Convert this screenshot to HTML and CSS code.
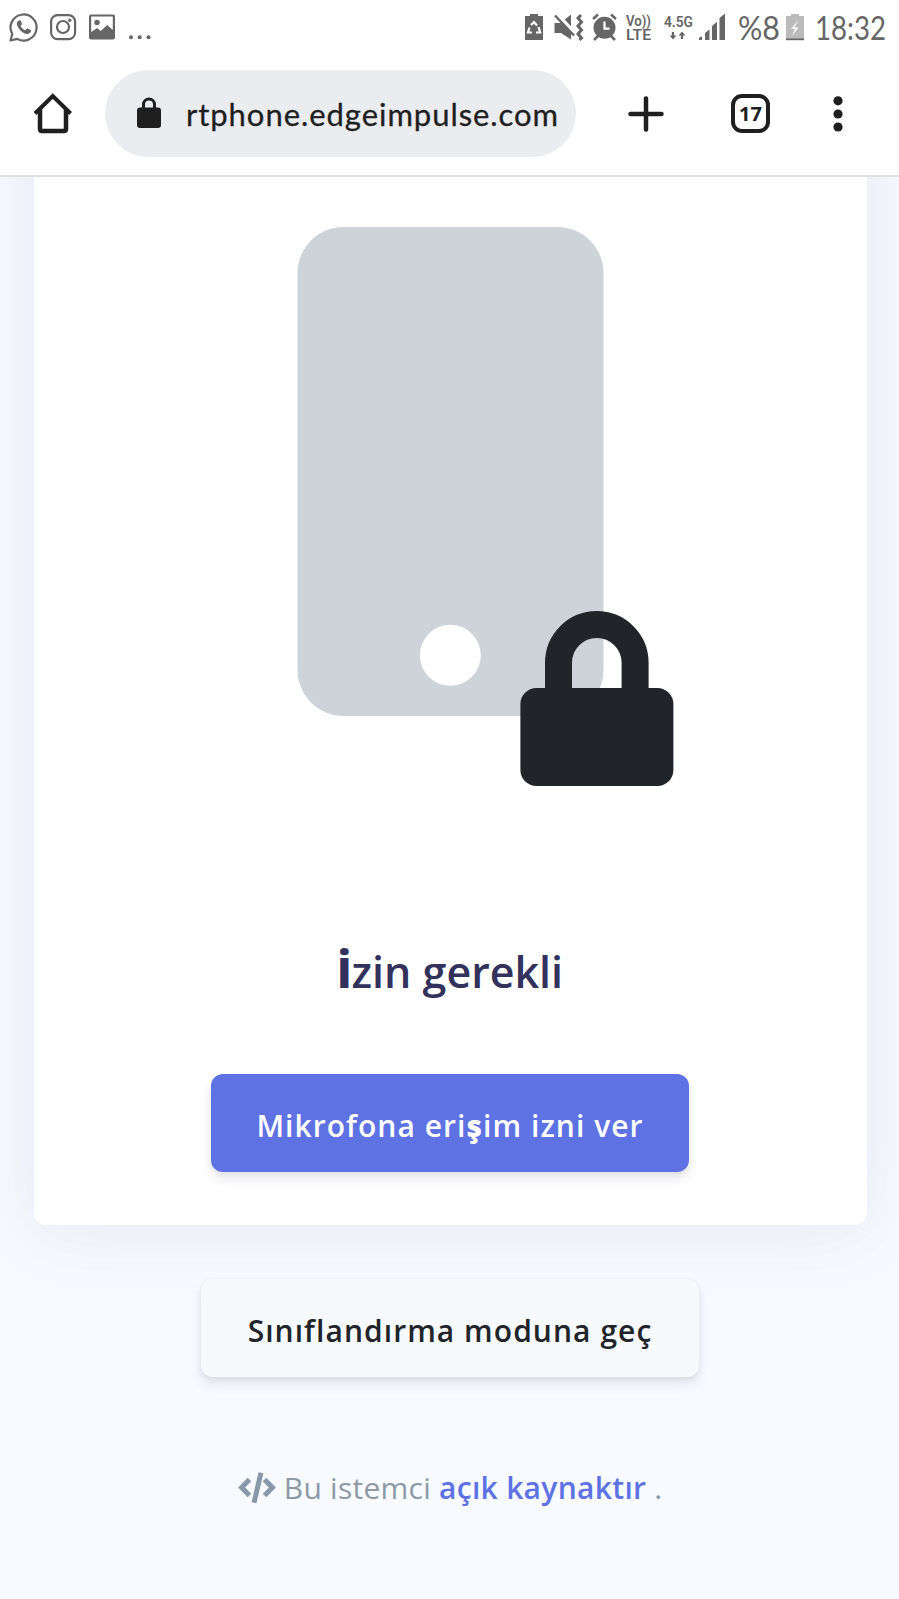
FILE: index.html
```
<!DOCTYPE html>
<html lang="tr">
<head>
<meta charset="utf-8">
<title>İzin gerekli</title>
<link rel="stylesheet" href="styles.css">
</head>
<body>
<header class="browser">
  <div class="status">
    <svg class="ic" width="30" height="55" viewBox="9 0 30 55"><path d="M10.5 40.5 12.3 34A13 13 0 1 1 17.3 38.9Z" fill="none" stroke="#666" stroke-width="2.2" stroke-linejoin="round"/><path d="M19 20.5c-3 1.3-2.5 4.500-.5 7.500 2.700 4 6.500 6.700 10 5.800 2-.6 2.900-2.400 2.500-3.500l-3.800-2-2 2c-2-.7-3.900-2.600-4.600-4.500l1.500-1.800-1.600-3.700z" fill="#666"/></svg>
    <svg class="ic insta" width="28" height="55" viewBox="49 0 28 55"><g fill="none" stroke="#666" stroke-width="2.200"><rect x="51.100" y="15.100" width="24" height="24" rx="6.500"/><circle cx="63" cy="27" r="6"/></g><circle cx="69.800" cy="20.300" r="1.700" fill="#666"/></svg>
    <svg class="ic photo" width="28" height="55" viewBox="88 0 28 55"><path fill="#666" fill-rule="evenodd" d="M91 14.500h22a2 2 0 0 1 2 2v21a2 2 0 0 1-2 2H91a2 2 0 0 1-2-2v-21a2 2 0 0 1 2-2zM91.200 16.600v15.400l6-4 3.500 3 6.500-6 5.600 5V16.600z"/><circle cx="97" cy="22.500" r="2.700" fill="#666"/></svg>
    <svg class="ic dots" width="24" height="55" viewBox="128 0 24 55" fill="#666"><circle cx="131" cy="37.300" r="2"/><circle cx="139.700" cy="37.300" r="2"/><circle cx="148.500" cy="37.300" r="2"/></svg>
    <svg class="ic right" width="380" height="55" viewBox="519 0 380 55">
      <path d="M530 14h8v2h5v24h-18V16h5z" fill="#666"/>
      <g fill="none" stroke="#fff" stroke-width="2.200"><path d="m531 25 3-3 3 3.500M529.500 27.500l-1.500 5h4M538.500 27l1.700 5.500H536"/></g>
      <path d="M554.500 23h6L571 14.500v25L561 33h-6.500z" fill="#666"/><path d="m556 13.500 20 21" stroke="#fff" stroke-width="4"/><path d="m555 15.500 19 20" stroke="#666" stroke-width="2.500"/>
      <path d="m581 15-3 3 3.500 4-3.500 4 3.500 4-3.500 4 3.500 4-2 2" fill="none" stroke="#666" stroke-width="3"/>
      <circle cx="604.500" cy="27.800" r="11" fill="#666"/><path d="m593 19 5-4.500M611 14.500l5 4.500M598 36l-4 4M611 36l4 4" stroke="#666" stroke-width="2.500"/><path d="M604.500 21.500v7.200h5" fill="none" stroke="#fff" stroke-width="2.200"/>
      <g class="tiny"><text x="626" y="25.500" textLength="25" lengthAdjust="spacingAndGlyphs">Vo))</text><text x="626" y="40" textLength="25" lengthAdjust="spacingAndGlyphs">LTE</text><text x="664" y="26.500" textLength="29" lengthAdjust="spacingAndGlyphs">4.5G</text></g>
      <path d="M673 32v5M682 39v-5" stroke="#666" stroke-width="2.300"/><path d="M669.500 35.500h7l-3.500 4zM678.500 35.500h7l-3.500-4z" fill="#666"/>
      <path d="M699 40v-2.200l3-1.500V40zM705 40v-7l4.500-3.800V40zM712 40V26l5-4.200V40zM719.500 40V18l5.500-4.500V40z" fill="#666"/>
      <text class="clock" x="738" y="40" textLength="42" lengthAdjust="spacingAndGlyphs">%8</text>
      <path d="M791 14h8v2h5v24h-18V16h5z" fill="#bbb"/><path d="M786 38.500h18v1.700h-18z" fill="#666"/><path d="m798.500 20-7.500 9h4l-3 7 6.500-8.500h-4z" fill="#fff"/>
      <text class="clock" x="815" y="40" textLength="71" lengthAdjust="spacingAndGlyphs">18:32</text>
    </svg>
  </div>
  <div class="toolbar">
    <svg class="ic home" width="42" height="42" viewBox="32 92 42 42"><path d="M40 109v20q0 2 2 2h22q2 0 2-2V109" fill="none" stroke="#1f1f1f" stroke-width="4.500" stroke-linejoin="round"/><path d="m35 113.500 17.800-17.500L70.600 113.500" fill="none" stroke="#1f1f1f" stroke-width="4"/></svg>
    <div class="address">
      <svg class="ic lock" width="24" height="32" viewBox="0 0 24 32"><path d="M6.500 13V7.500a5.500 5.500 0 0 1 11 0v5.500" fill="none" stroke="#1f1f1f" stroke-width="3"/><rect y="10.500" width="24" height="20.500" rx="3" fill="#1f1f1f"/></svg>
      <span class="url">rtphone.edgeimpulse.com</span>
    </div>
    <svg class="ic plus" width="36" height="36" viewBox="0 0 36 36"><path d="M18 2.500v31M2.500 18h31" stroke="#1f1f1f" stroke-width="4.500" stroke-linecap="round"/></svg>
    <div class="tabs">17</div>
    <svg class="ic menu" width="10" height="36" viewBox="0 0 10 36" fill="#1f1f1f"><circle cx="5" cy="4.800" r="4.600"/><circle cx="5" cy="18" r="4.600"/><circle cx="5" cy="31" r="4.600"/></svg>
  </div>
</header>
<main class="page">
  <section class="card">
    <svg class="ic phone" width="378" height="562" viewBox="297 226 378 562">
      <rect x="297.500" y="227" width="306" height="489" rx="46" fill="#ced3da"/><circle cx="450.300" cy="655.300" r="30.500" fill="#fff"/>
      <path d="M558.500 700v-37.200a38.300 38.300 0 0 1 76.600 0V700" fill="none" stroke="#212429" stroke-width="27"/>
      <rect x="520.400" y="688" width="153" height="98" rx="16" fill="#212429"/>
    </svg>
    <h1 class="title"><b>İ</b>zin gerekli</h1>
    <button class="btn primary"><span>Mikrofona eri<b>ş</b>im izni ver</span></button>
  </section>
  <button class="btn secondary"><span>Sınıflandırma moduna geç</span></button>
  <p class="foot">
    <svg class="ic" width="38" height="32" viewBox="0 0 38 32" fill="none" stroke="#8898aa" stroke-width="5"><path d="M11.500 7.500 3.600 15.500l7.900 8M26.500 7.500l7.900 8-7.900 8"/><path d="m23 .8-7 30"/></svg>
    <span class="grey">Bu istemci</span><a class="link">açık kaynaktır</a><span>.</span>
  </p>
</main>
</body>
</html>
```
FILE: styles.css
```
* { box-sizing: border-box; }
body { margin: 0; width: 899px; height: 1599px; overflow: hidden; background: #f7fafe; font-family: "Open Sans", "Noto Sans", sans-serif; }
.ic { display: block; flex: none; }
.browser { position: relative; z-index: 1; height: 176.5px; background: #fff; border-bottom: 2px solid #dfdfe1; }
.status { display: flex; height: 55px; padding-left: 9px; }
.insta { margin-left: 10px; }
.photo { margin-left: 11px; }
.dots { margin-left: 12px; }
.right { margin-left: auto; }
.tiny { font: 600 14px "Roboto", sans-serif; fill: #666; }
.clock { font: 400 32px "Lato", sans-serif; fill: #666; }
.toolbar { display: flex; align-items: center; height: 117px; padding: 0 56px 0 32px; }
.home { margin-bottom: 2px; }
.address { display: flex; align-items: center; width: 471px; height: 87px; margin-left: 31px; padding-left: 32px; border-radius: 44px; background: #ebecf0; }
.lock { margin-bottom: 2px; }
.url { margin-left: 25px; padding-top: 1px; font: 400 31px/40px "Lato", sans-serif; letter-spacing: .95px; color: #1f1f1f; -webkit-text-stroke: .3px #1f1f1f; white-space: nowrap; }
.plus { margin-left: 52px; }
.tabs { display: flex; align-items: center; justify-content: center; width: 39px; height: 39px; margin-left: 67px; border: 4px solid #1f1f1f; border-radius: 11px; font-size: 20px; font-weight: 700; color: #1f1f1f; }
.menu { margin-left: auto; }
.page { display: flex; flex-direction: column; align-items: center; height: 1423px; padding-left: 1px; }
.card { display: flex; flex-direction: column; align-items: center; flex: none; width: 833px; height: 1168.5px; margin-top: -120px; padding-top: 169.5px; border-radius: 12px; background: #fff; box-shadow: 0 0 80px rgba(130,130,175,.1), 0 12px 60px rgba(50,50,93,.03); }
.phone { margin-left: 71px; }
.title { margin: 149px 0 0; font-size: 43px; font-weight: 600; line-height: 70px; color: #32325d; white-space: nowrap; }
.title b { font-size: 42px; }
.btn { flex: none; height: 98px; padding: 4px 0 0; border: 0; border-radius: 12px; font: 600 30px "Open Sans", sans-serif; letter-spacing: 1.05px; white-space: nowrap; box-shadow: 0 8px 12px rgba(50,50,93,.09), 0 2px 6px rgba(0,0,0,.07); }
.primary { width: 478px; margin-top: 67px; background: #5e72e4; color: #fff; }
.secondary { width: 498px; margin-top: 54px; background: #f6fafd; color: #212529; }
.foot { display: flex; align-items: center; height: 48px; margin: 87px 0 0; font-size: 30px; line-height: 48px; color: #8898aa; white-space: nowrap; }
.grey { margin-left: 8px; color: #8e99a6; letter-spacing: .25px; }
.link { margin: 0 8px; font-weight: 600; letter-spacing: .3px; color: #5e72e4; }
```
